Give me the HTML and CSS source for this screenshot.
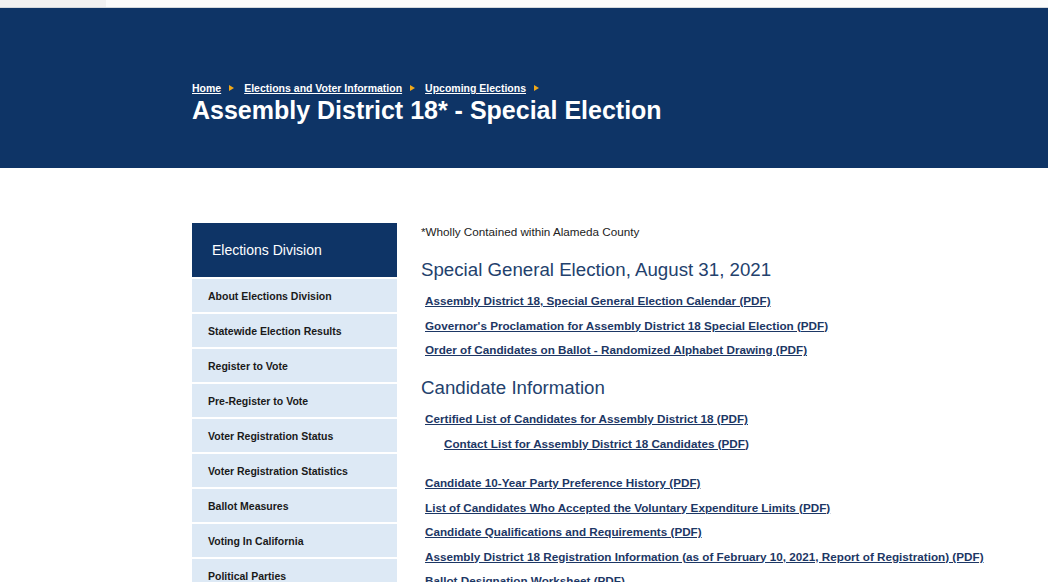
FILE: index.html
```html
<!DOCTYPE html>
<html lang="en">
<head>
<meta charset="utf-8">
<title>Assembly District 18* - Special Election</title>
<link rel="stylesheet" href="styles.css">
</head>
<body>
<div class="topstrip"><div class="topstrip-left"></div><div class="topstrip-right"></div></div>
<header class="banner">
  <nav class="crumbs">
    <a href="#">Home</a><span class="tri"></span>
    <a href="#">Elections and Voter Information</a><span class="tri"></span>
    <a href="#">Upcoming Elections</a><span class="tri"></span>
  </nav>
  <h1 class="title">Assembly District 18* - Special Election</h1>
</header>
<main class="main">
  <aside class="side">
    <div class="side-head">Elections Division</div>
    <ul class="side-list">
      <li>About Elections Division</li>
      <li>Statewide Election Results</li>
      <li>Register to Vote</li>
      <li>Pre-Register to Vote</li>
      <li>Voter Registration Status</li>
      <li>Voter Registration Statistics</li>
      <li>Ballot Measures</li>
      <li>Voting In California</li>
      <li>Political Parties</li>
    </ul>
  </aside>
  <section class="content">
    <p class="intro">*Wholly Contained within Alameda County</p>
    <h2 class="sec first">Special General Election, August 31, 2021</h2>
    <ul class="links">
      <li><a href="#">Assembly District 18, Special General Election Calendar (PDF)</a></li>
      <li><a href="#">Governor's Proclamation for Assembly District 18 Special Election (PDF)</a></li>
      <li><a href="#">Order of Candidates on Ballot - Randomized Alphabet Drawing (PDF)</a></li>
    </ul>
    <h2 class="sec">Candidate Information</h2>
    <ul class="links">
      <li><a href="#">Certified List of Candidates for Assembly District 18 (PDF)</a></li>
      <li class="sub"><a href="#">Contact List for Assembly District 18 Candidates (PDF)</a></li>
    </ul>
    <ul class="links spaced">
      <li><a href="#">Candidate 10-Year Party Preference History (PDF)</a></li>
      <li><a href="#">List of Candidates Who Accepted the Voluntary Expenditure Limits (PDF)</a></li>
      <li><a href="#">Candidate Qualifications and Requirements (PDF)</a></li>
      <li><a href="#">Assembly District 18 Registration Information (as of February 10, 2021, Report of Registration) (PDF)</a></li>
      <li><a href="#">Ballot Designation Worksheet (PDF)</a></li>
    </ul>
  </section>
</main>
</body>
</html>
```

FILE: styles.css
```css
html, body {
  margin: 0;
  padding: 0;
  background: #fff;
  font-family: "Liberation Sans", Arial, sans-serif;
  overflow: hidden;
}

.topstrip {
  display: flex;
  height: 7px;
  border-bottom: 1px solid #d4d8dc;
}
.topstrip-left {
  width: 106px;
  background: #f1f1f1;
}
.topstrip-right {
  flex: 1;
  background: #fbfbfb;
}

.banner {
  background: #0e3466;
  height: 160px;
  box-sizing: border-box;
  padding: 73px 0 0 192px;
}

.crumbs {
  display: flex;
  align-items: center;
  height: 14px;
  font-size: 10.5px;
  font-weight: bold;
}
.crumbs a {
  color: #fff;
  text-decoration: underline;
}
.tri {
  width: 0;
  height: 0;
  border-top: 3.5px solid transparent;
  border-bottom: 3.5px solid transparent;
  border-left: 5px solid #f0a818;
  margin: 0 10px 0 8px;
}

.title {
  margin: 0;
  color: #fff;
  font-size: 25px;
  line-height: 30px;
  font-weight: bold;
}

.main {
  display: flex;
  align-items: flex-start;
  padding: 55px 0 0 192px;
  gap: 24px;
}

.side {
  width: 205px;
  flex: none;
}
.side-head {
  background: #0e3466;
  color: #fff;
  height: 54px;
  box-sizing: border-box;
  padding-left: 20px;
  margin-bottom: 2px;
  display: flex;
  align-items: center;
  font-size: 14px;
}
.side-list {
  list-style: none;
  margin: 0;
  padding: 0;
}
.side-list li {
  margin-top: 2px;
  height: 33px;
  background: #dde9f5;
  display: flex;
  align-items: center;
  padding-left: 16px;
  font-size: 10.5px;
  font-weight: bold;
  color: #1a1a1a;
}

.content {
  flex: 1;
  padding-top: 1px;
}
.intro {
  margin: 0;
  font-size: 11.7px;
  line-height: 16px;
  color: #222;
}
.sec {
  margin: 13.5px 0 0 0;
  font-size: 18.7px;
  line-height: 24px;
  font-weight: normal;
  color: #23416d;
}
.sec.first {
  margin-top: 18px;
}
.links {
  list-style: none;
  margin: 7px 0 0 0;
  padding: 0 0 0 4px;
}
.links.spaced {
  margin-top: 15px;
}
.links li {
  line-height: 24.5px;
  font-size: 11.7px;
  font-weight: bold;
  white-space: nowrap;
}
.links li.sub {
  padding-left: 19px;
}
.links a {
  color: #1d3765;
  text-decoration: underline;
}
```
